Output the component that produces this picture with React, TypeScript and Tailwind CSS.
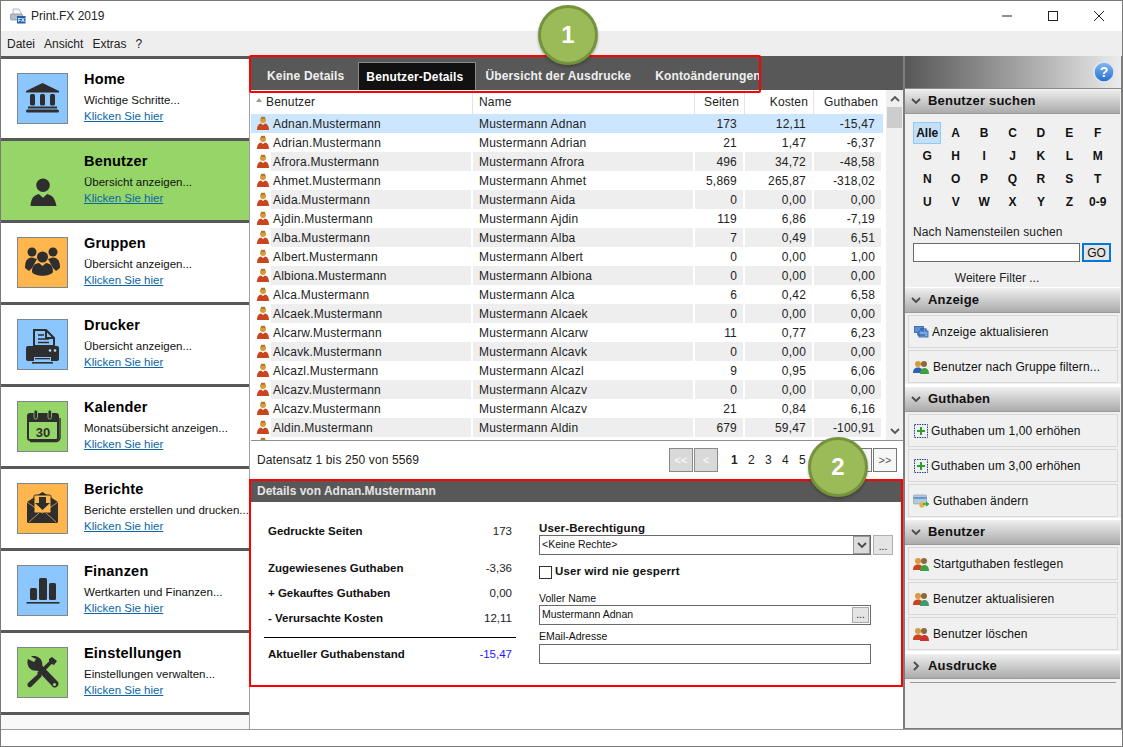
import React from "react";

const D = "#2e2e2e";

function IconBox({ bg, children }: { bg?: string; children: React.ReactNode }) {
  return (
    <div
      className={"w-[51px] h-[51px] shrink-0 " + (bg ? "border border-[#7d8790]" : "")}
      style={bg ? { background: bg } : undefined}
    >
      <svg viewBox="0 0 49 49" className="w-full h-full">{children}</svg>
    </div>
  );
}

const Bank = () => (
  <g fill={D}>
    <path d="M24.5 9 L41 17 V18.5 H8 V17 Z" />
    <rect x="12" y="20" width="5" height="11.5" rx="1.5" />
    <rect x="22" y="20" width="5" height="11.5" rx="1.5" />
    <rect x="32" y="20" width="5" height="11.5" rx="1.5" />
    <rect x="10" y="32.5" width="29" height="2" />
    <rect x="8" y="35.5" width="33" height="3" rx="1.5" />
  </g>
);
const Person = () => (
  <g fill={D}>
    <circle cx="25" cy="29" r="6.5" />
    <path d="M13 49 C13.5 42 15.5 39 21 37.5 L25 41 L29 37.5 C34.5 39 36.5 42 38 49 Z" />
  </g>
);
const Group = () => (
  <g fill={D}>
    <circle cx="14" cy="14" r="4.5" />
    <circle cx="35" cy="14" r="4.5" />
    <path d="M7 30 C7 23 9 20 14 19.5 L19 21 L14 30 L11 33 Z" />
    <path d="M42 30 C42 23 40 20 35 19.5 L30 21 L35 30 L38 33 Z" />
    <circle cx="24.5" cy="19" r="5.5" />
    <path d="M14 34 C14 27 17 25.5 21 25 L24.5 28 L28 25 C32 25.5 35 27 35 34 C32 39 17 39 14 34 Z" />
  </g>
);
const Printer = () => (
  <g>
    <path d="M16 10 H28 L36 18 V26 H16 Z" fill="#8cc6ff" stroke={D} strokeWidth="2" />
    <path d="M28 10 V18 H36" fill="none" stroke={D} strokeWidth="2" />
    <path d="M20 15 H26 M20 19 H31 M20 22.5 H31" stroke={D} strokeWidth="1.3" />
    <path d="M10 26 H39 Q41 26 41 28 V39 Q41 41 39 41 H10 Q8 41 8 39 V28 Q8 26 10 26 Z" fill={D} />
    <rect x="16" y="37" width="17" height="5" fill="#8cc6ff" />
    <rect x="17" y="38" width="15" height="1.3" fill={D} />
    <rect x="14" y="42" width="21" height="1.6" fill={D} />
    <circle cx="32" cy="30.5" r="1.3" fill="#b8dcff" />
    <circle cx="37" cy="30.5" r="1.3" fill="#b8dcff" />
  </g>
);
const Calendar = () => (
  <g>
    <path d="M12 12 H38 Q40 12 40 14 V36 Q40 38 38 38 H12 Q10 38 10 36 V14 Q10 12 12 12 Z" fill="none" stroke={D} strokeWidth="2" />
    <path d="M10 13 H40 V20 H10 Z" fill={D} />
    <path d="M12 39.5 H38 Q41 39.5 42 36 V16" fill="none" stroke={D} strokeWidth="1.4" />
    <rect x="16" y="8" width="3.5" height="9" rx="1.7" fill={D} stroke="#96d568" strokeWidth="0.8" />
    <rect x="30" y="8" width="3.5" height="9" rx="1.7" fill={D} stroke="#96d568" strokeWidth="0.8" />
    <text x="25" y="34.5" textAnchor="middle" fontSize="13" fontWeight="700" fontFamily="Liberation Sans" fill={D}>30</text>
  </g>
);
const Mail = () => (
  <g>
    <path d="M9 18 L24.5 8 L40 18 V38 Q40 39 38 39 H11 Q9 39 9 38 Z" fill={D} />
    <rect x="16" y="11" width="17" height="18" rx="1.5" fill="#ffb74d" stroke={D} strokeWidth="1" />
    <path d="M21 13 H28 V19 H32 L24.5 26 L17 19 H21 Z" fill={D} />
    <path d="M9 18 L24.5 29 L40 18" fill="none" stroke="#ffb74d" strokeWidth="0.7" />
    <path d="M11 38 L21 29 M38 38 L28 29" stroke="#ffb74d" strokeWidth="0.7" />
  </g>
);
const Bars = () => (
  <g fill={D}>
    <rect x="12" y="22" width="7" height="12" rx="1.5" />
    <rect x="21" y="12" width="8" height="22" rx="1.5" />
    <rect x="31" y="17" width="7" height="17" rx="1.5" />
    <rect x="8.5" y="36" width="33" height="1.6" />
  </g>
);
const Tools = () => (
  <g fill={D}>
    <path d="M10 11 L16 14 L18 11 L13 8.5 C18 7 23 10 24 14 C24.5 16 24 17.5 25 18.5 L40 34 C42 37 38 41 35 39 L20 23 C18 22.5 16 23 14 22 C10 20 8.5 15 10 11 Z" />
    <path d="M34 9 L39 13 L36 17 L33.5 16 L22 28 L19 25 L31 13.5 L31 11 Z" />
    <path d="M21 25 L24 28 L14 38 C12 41 8 38 10 35 Z" />
    <circle cx="36.5" cy="36.5" r="1.6" fill="#96d568" />
  </g>
);

const navItems: [string, string, string | undefined, React.ReactNode][] = [
  ["Home", "Wichtige Schritte...", "#8cc6ff", <Bank />],
  ["Benutzer", "Übersicht anzeigen...", undefined, <Person />],
  ["Gruppen", "Übersicht anzeigen...", "#ffb74d", <Group />],
  ["Drucker", "Übersicht anzeigen...", "#8cc6ff", <Printer />],
  ["Kalender", "Monatsübersicht anzeigen...", "#96d568", <Calendar />],
  ["Berichte", "Berichte erstellen und drucken...", "#ffb74d", <Mail />],
  ["Finanzen", "Wertkarten und Finanzen...", "#8cc6ff", <Bars />],
  ["Einstellungen", "Einstellungen verwalten...", "#96d568", <Tools />],
];

const rows: [string, string, string, string][] = [
  ["Adnan", "173", "12,11", "-15,47"],
  ["Adrian", "21", "1,47", "-6,37"],
  ["Afrora", "496", "34,72", "-48,58"],
  ["Ahmet", "5,869", "265,87", "-318,02"],
  ["Aida", "0", "0,00", "0,00"],
  ["Ajdin", "119", "6,86", "-7,19"],
  ["Alba", "7", "0,49", "6,51"],
  ["Albert", "0", "0,00", "1,00"],
  ["Albiona", "0", "0,00", "0,00"],
  ["Alca", "6", "0,42", "6,58"],
  ["Alcaek", "0", "0,00", "0,00"],
  ["Alcarw", "11", "0,77", "6,23"],
  ["Alcavk", "0", "0,00", "0,00"],
  ["Alcazl", "9", "0,95", "6,06"],
  ["Alcazv", "0", "0,00", "0,00"],
  ["Alcazv", "21", "0,84", "6,16"],
  ["Aldin", "679", "59,47", "-100,91"],
];

const UserIcon = () => (
  <svg viewBox="0 0 14 15" className="w-[14px] h-[15px] shrink-0">
    <circle cx="7" cy="4" r="3" fill="#d99a3c" />
    <rect x="5" y="0.8" width="4" height="2" fill="#a8772c" />
    <path d="M1 14 C1 9.5 3 8 5 7.5 L7 9 L9 7.5 C11 8 13 9.5 13 14 Z" fill="#c8451e" />
  </svg>
);

const SmallUsers = ({ a, b }: { a: string; b: string }) => (
  <svg viewBox="0 0 18 16" className="w-[18px] h-[16px] shrink-0">
    <circle cx="6" cy="5" r="3" fill="#d99a3c" />
    <path d="M1 14 C1 10 3 8.5 6 8.5 C9 8.5 11 10 11 14 Z" fill={a} />
    <circle cx="12" cy="5" r="3" fill="#8a6a3a" />
    <path d="M8 15 C8 11 10 9 12.5 9 C15 9 17 11 17 15 Z" fill={b} />
  </svg>
);

const PlusIcon = () => (
  <svg viewBox="0 0 14 14" className="w-[14px] h-[14px] shrink-0">
    <rect x="0.5" y="0.5" width="13" height="13" fill="none" stroke="#1b3f8f" strokeDasharray="1.5 1" />
    <path d="M7 3 V11 M3 7 H11" stroke="#2e9e2e" strokeWidth="2" />
  </svg>
);

const RefreshIcon = () => (
  <svg viewBox="0 0 15 12" className="w-[15px] h-[12px] shrink-0">
    <rect x="0.5" y="0.5" width="9" height="6" fill="#5b8fd8" stroke="#2a5ca8" strokeWidth="0.8" />
    <rect x="5" y="5" width="9" height="6" fill="#7aa9e6" stroke="#2a5ca8" strokeWidth="0.8" />
    <path d="M6 3 H12 V5 M11 9 H4 V7" fill="none" stroke="#1d4a96" strokeWidth="1.2" />
  </svg>
);

const CardIcon = () => (
  <svg viewBox="0 0 16 14" className="w-[16px] h-[14px] shrink-0">
    <rect x="0.5" y="1" width="13" height="9" rx="1" fill="#b9c7d6" stroke="#8a9aaa" strokeWidth="0.6" />
    <rect x="0.5" y="3" width="13" height="2" fill="#5c9bd8" />
    <circle cx="9" cy="11" r="2.6" fill="#e2b23a" />
    <path d="M10 10 H15 M13 8 L15.5 10 L13 12" fill="none" stroke="#3ba53b" strokeWidth="1.5" />
  </svg>
);

const Chevron = ({ right }: { right?: boolean }) => (
  <svg viewBox="0 0 10 10" className="w-[10px] h-[10px] shrink-0">
    <path d={right ? "M3 1 L7 5 L3 9" : "M1 3 L5 7 L9 3"} fill="none" stroke="#4a4a4a" strokeWidth="1.8" />
  </svg>
);

const SectionHead = ({ label, closed, h = "h-[25px]" }: { label: string; closed?: boolean; h?: string }) => (
  <div className={"flex items-center gap-[7px] pl-[6px] border-b border-[#9a9a9a] bg-gradient-to-b from-[#f0f0f0] to-[#ababab] mr-[1px] " + h}>
    <Chevron right={closed} />
    <span className="font-bold text-[13px] text-[#111] tracking-[0.2px]">{label}</span>
  </div>
);

const ActionBtn = ({ icon, label, gap = "gap-[5px]" }: { icon: React.ReactNode; label: string; gap?: string }) => (
  <div className={"flex items-center h-[33px] mx-[3px] mt-[2px] border border-[#d8d8d8] pl-[3px] text-[12px] text-[#111] tracking-[0.12px] " + gap}>
    <div className="w-[18px] flex justify-center shrink-0">{icon}</div>
    <span>{label}</span>
  </div>
);

const letters = ["Alle", "A", "B", "C", "D", "E", "F", "G", "H", "I", "J", "K", "L", "M", "N", "O", "P", "Q", "R", "S", "T", "U", "V", "W", "X", "Y", "Z", "0-9"];

const PageBtn = ({ label, disabled }: { label: string; disabled?: boolean }) => (
  <div className={"w-[24px] h-[24px] flex items-center justify-center text-[11px] border " + (disabled ? "bg-[#d9d9d9] border-[#8a8a8a] text-white" : "bg-[#f6f6f6] border-[#777] text-[#555]")}>
    {label}
  </div>
);

const StatRow = ({ label, value, h, blue }: { label: string; value: string; h: string; blue?: boolean }) => (
  <div className={"flex items-center justify-between " + h}>
    <span className="font-bold text-[11.5px] text-[#111]">{label}</span>
    <span className={"text-[11.5px] " + (blue ? "text-[#1a1aff]" : "text-[#222]")}>{value}</span>
  </div>
);

const Badge = ({ n, cls }: { n: string; cls: string }) => (
  <div className={"absolute w-[60px] h-[60px] rounded-full bg-[#9bbb59] border-[3px] border-[#76923c] flex items-center justify-center text-white font-bold text-[24px] shadow-[0_2px_3px_rgba(0,0,0,0.25)] " + cls}>
    {n}
  </div>
);

export default function App() {
  return (
    <div className="relative w-[1123px] h-[747px] overflow-hidden flex flex-col border border-[#7a7a7a] bg-white font-['Liberation_Sans',sans-serif] text-[12px] text-[#111]">
      {/* title bar */}
      <div className="h-[30px] shrink-0 flex items-center bg-white">
        <svg viewBox="0 0 16 16" className="w-[16px] h-[16px] ml-[9px]">
          <path d="M3 1 H9 L11 4 V8 H3 Z" fill="#f4f6f8" stroke="#9aa4ae" strokeWidth="0.7" />
          <rect x="0.5" y="6" width="12" height="6" rx="1" fill="#b4bec8" stroke="#75808c" strokeWidth="0.6" />
          <rect x="7" y="8" width="8.5" height="7.5" fill="#1f5fa8" />
          <text x="11.2" y="14.2" textAnchor="middle" fontSize="5.5" fontWeight="700" fill="#fff" fontFamily="Liberation Sans">FX</text>
        </svg>
        <span className="ml-[5px] text-[12px] text-[#222]">Print.FX 2019</span>
        <div className="ml-auto flex items-center mr-[0px]">
          <svg viewBox="0 0 46 30" className="w-[46px] h-[30px]"><path d="M18 15 H28" stroke="#222" strokeWidth="1" /></svg>
          <svg viewBox="0 0 46 30" className="w-[46px] h-[30px]"><rect x="18.5" y="10.5" width="9" height="9" fill="none" stroke="#222" /></svg>
          <svg viewBox="0 0 46 30" className="w-[46px] h-[30px]"><path d="M18 10 L28 20 M28 10 L18 20" stroke="#222" /></svg>
        </div>
      </div>
      {/* menu */}
      <div className="h-[25px] shrink-0 flex items-center gap-[9px] pl-[6px] bg-[#eeeeee] text-[12px] text-[#222]">
        <span>Datei</span>
        <span>Ansicht</span>
        <span>Extras</span>
        <span>?</span>
      </div>
      {/* body */}
      <div className="flex h-[673px] shrink-0 bg-white">
        {/* sidebar */}
        <div className="w-[248px] shrink-0 bg-[#f8f8f8] border-t-[3px] border-[#585858] self-stretch mr-[1px] shadow-[1px_0_0_#a0a0a0]">
          {navItems.map(([title, sub, bg, icon], i) => (
            <div key={title} className={"flex h-[82px] border-b-[3px] border-[#585858] pl-[16px] pt-[14px] " + (i === 1 ? "bg-[#96d568]" : "bg-white")}>
              <IconBox bg={bg}>{icon}</IconBox>
              <div className="ml-[16px] -mt-[3px]">
                <div className="font-bold text-[14.5px] leading-[18px] text-black tracking-[0.2px]">{title}</div>
                <div className="text-[11.5px] leading-[14px] mt-[5px] text-[#111]">{sub}</div>
                <div className="text-[11.5px] leading-[14px] mt-[2px] text-[#0b66a5] underline">Klicken Sie hier</div>
              </div>
            </div>
          ))}
        </div>
        {/* main */}
        <div className="w-[653px] shrink-0 flex flex-col pl-[1px]">
          <div className="h-[34px] shrink-0 bg-[#585858] flex items-end font-bold text-[12px] text-[#f0f0f0] tracking-[0.15px]">
            <div className="h-[28px] flex items-center ml-[16px] mt-[5px]">Keine Details</div>
            <div className="h-[28px] flex items-center ml-[14px] pl-[7px] pr-[12px] bg-[#111] border border-b-0 border-[#8a8a8a] text-white">Benutzer-Details</div>
            <div className="h-[28px] flex items-center ml-[9px]">Übersicht der Ausdrucke</div>
            <div className="h-[28px] flex items-center ml-[24px]">Kontoänderungen</div>
          </div>
          <div className="h-[351px] shrink-0 flex border-b border-[#909090]">
            <div className="w-[635px] shrink-0 overflow-hidden">
              <div className="h-[24px] flex items-center text-[12px] text-[#222] tracking-[0.15px]">
                <div className="w-[222px] h-full flex items-center border-r border-[#e4e4e4] relative">
                  <svg viewBox="0 0 6 4" className="w-[6px] h-[4px] ml-[5px] mb-[5px]"><path d="M3 0 L6 4 H0 Z" fill="#999" /></svg>
                  <span className="ml-[4px]">Benutzer</span>
                </div>
                <div className="w-[222px] h-full flex items-center pl-[6px] border-r border-[#e4e4e4]">Name</div>
                <div className="w-[50px] h-full flex items-center justify-end pr-[5px] border-r border-[#e4e4e4]">Seiten</div>
                <div className="w-[69px] h-full flex items-center justify-end pr-[5px] border-r border-[#e4e4e4]">Kosten</div>
                <div className="w-[69px] h-full flex items-center justify-end pr-[5px]">Guthaben</div>
              </div>
              {rows.map(([n, s, k, g], i) => {
                const sel = i === 0;
                const alt = i % 2 === 0 && !sel;
                const cell = alt ? "bg-[#eeeeee]" : "";
                return (
                  <div key={i} className={"flex h-[19px] text-[12px] text-[#222] tracking-[0.2px] " + (sel ? "bg-[#cce6ff] w-[632px]" : "")}>
                    <div className="w-[20px] shrink-0 flex items-center pl-[5px]"><UserIcon /></div>
                    <div className={"w-[200px] shrink-0 flex items-center pl-[2px] " + cell}>{n}.Mustermann</div>
                    <div className={"w-[220px] shrink-0 ml-[2px] flex items-center pl-[6px] " + cell}>Mustermann {n}</div>
                    <div className={"w-[48px] shrink-0 ml-[2px] flex items-center justify-end pr-[6px] " + cell}>{s}</div>
                    <div className={"w-[67px] shrink-0 ml-[2px] flex items-center justify-end pr-[6px] " + cell}>{k}</div>
                    <div className={"w-[67px] shrink-0 ml-[2px] flex items-center justify-end pr-[6px] " + cell}>{g}</div>
                  </div>
                );
              })}
              <div className="flex h-[19px]"><div className="pl-[5px]"><UserIcon /></div></div>
            </div>
            <div className="w-[17px] shrink-0 bg-[#f0f0f0] flex flex-col items-center">
              <svg viewBox="0 0 10 10" className="w-[10px] h-[10px] mt-[4px]"><path d="M1 7 L5 3 L9 7" fill="none" stroke="#555" strokeWidth="1.8" /></svg>
              <div className="w-[15px] h-[21px] bg-[#cdcdcd] mt-[3px]" />
              <svg viewBox="0 0 10 10" className="w-[10px] h-[10px] mt-auto mb-[4px]"><path d="M1 3 L5 7 L9 3" fill="none" stroke="#555" strokeWidth="1.8" /></svg>
            </div>
          </div>
          <div className="h-[38px] shrink-0 flex items-center pl-[6px] text-[12px] text-[#222] tracking-[0.12px]">
            <span>Datensatz 1 bis 250 von 5569</span>
            <div className="ml-auto flex items-center gap-[1px] mr-[6px]">
              <PageBtn label="<<" disabled />
              <PageBtn label="<" disabled />
              <div className="flex w-[127px] pl-[7px] text-[12px] mr-[1px]">
                <span className="w-[17px] text-center font-bold">1</span>
                <span className="w-[17px] text-center">2</span>
                <span className="w-[17px] text-center">3</span>
                <span className="w-[17px] text-center">4</span>
                <span className="w-[17px] text-center">5</span>
              </div>
              <PageBtn label=">" />
              <PageBtn label=">>" />
            </div>
          </div>
          <div className="h-[23px] shrink-0 bg-[#585858] flex items-center pl-[6px] font-bold text-[12px] text-[#e4e4e4]">Details von Adnan.Mustermann</div>
          <div className="flex pt-[20px]">
            <div className="w-[252px] ml-[13px] shrink-0 flex flex-col">
              <div className="px-[4px]">
                <StatRow label="Gedruckte Seiten" value="173" h="h-[20px] mb-[17px]" />
                <StatRow label="Zugewiesenes Guthaben" value="-3,36" h="h-[20px] mb-[5px]" />
                <StatRow label="+ Gekauftes Guthaben" value="0,00" h="h-[20px] mb-[5px]" />
                <StatRow label="- Verursachte Kosten" value="12,11" h="h-[20px]" />
              </div>
              <div className="border-t border-black mt-[8px]" />
              <div className="px-[4px] mt-[7px]">
                <StatRow label="Aktueller Guthabenstand" value="-15,47" h="h-[20px]" blue />
              </div>
            </div>
            <div className="ml-[23px] w-[354px] flex flex-col">
              <div className="font-bold text-[11.5px] leading-[14px] -mt-[1px] tracking-[0.15px]">User-Berechtigung</div>
              <div className="flex items-center">
                <div className="w-[332px] h-[20px] border border-[#6a6a6a] flex items-center pl-[2px] text-[10.5px]">
                  <span>&lt;Keine Rechte&gt;</span>
                  <div className="ml-auto w-[17px] h-[18px] bg-[#dcdcdc] border border-[#999] flex items-center justify-center"><Chevron /></div>
                </div>
                <div className="ml-[2px] w-[20px] h-[20px] bg-[#e4e4e4] border border-[#b0b0b0] flex items-end justify-center text-[10px]">...</div>
              </div>
              <div className="flex items-center mt-[10px] h-[14px]">
                <div className="w-[13px] h-[13px] border border-[#333] bg-white" />
                <span className="ml-[3px] font-bold text-[11.5px] tracking-[0.15px]">User wird nie gesperrt</span>
              </div>
              <div className="text-[10.5px] leading-[13px] mt-[13px]">Voller Name</div>
              <div className="w-[332px] h-[20px] border border-[#6a6a6a] flex items-center pl-[2px] text-[10.5px]">
                <span>Mustermann Adnan</span>
                <div className="ml-auto mr-[1px] w-[17px] h-[16px] bg-[#e4e4e4] border border-[#aaa] flex items-end justify-center text-[10px]">...</div>
              </div>
              <div className="text-[10.5px] leading-[13px] mt-[5px]">EMail-Adresse</div>
              <div className="w-[332px] h-[20px] border border-[#6a6a6a] mt-[1px]" />
            </div>
          </div>
        </div>
        {/* right panel */}
        <div className="flex-1 flex flex-col bg-[#f0f0f0] border-l-2 border-r border-[#7d7d7d] border-b">
          <div className="h-[33px] shrink-0 flex items-center justify-end pr-[6px] bg-gradient-to-r from-[#585858] to-[#ececec] border-b border-[#8a8a8a]">
            <svg viewBox="0 0 22 22" className="w-[22px] h-[22px]">
              <defs>
                <linearGradient id="hb" x1="0" y1="0" x2="0" y2="1">
                  <stop offset="0" stopColor="#8ab8ee" />
                  <stop offset="1" stopColor="#1f6fd0" />
                </linearGradient>
              </defs>
              <circle cx="11" cy="11" r="10" fill="url(#hb)" stroke="#dfe7f0" strokeWidth="1.4" />
              <text x="11" y="16" textAnchor="middle" fontSize="14" fontWeight="700" fill="#fff" fontFamily="Liberation Sans">?</text>
            </svg>
          </div>
          <SectionHead label="Benutzer suchen" />
          <div className="h-[173px] shrink-0 px-[8px] pt-[8px]">
            <div className="grid grid-cols-7 w-[199px] gap-y-[1px]">
              {letters.map((l, i) => (
                <div key={l} className={"h-[22px] flex items-center justify-center font-bold text-[12px] " + (i === 0 ? "bg-[#c4dff6] border border-[#90c8f6]" : "")}>{l}</div>
              ))}
            </div>
            <div className="text-[12px] mt-[12px] leading-[14px] text-[#222] tracking-[0.12px]">Nach Namensteilen suchen</div>
            <div className="flex items-center gap-[2px] mt-[4px]">
              <div className="w-[167px] h-[19px] bg-white border border-[#6a6a6a]" />
              <div className="w-[29px] h-[19px] bg-[#e4e4e4] border-2 border-[#0078d7] flex items-center justify-center text-[12px]">GO</div>
            </div>
            <div className="text-center text-[12px] mt-[7px] w-[168px] ml-[0px] text-[#222]">Weitere Filter ...</div>
          </div>
          <div className="h-[1px] bg-white shrink-0" />
          <SectionHead label="Anzeige" />
          <ActionBtn icon={<RefreshIcon />} label="Anzeige aktualisieren" gap="gap-[2px]" />
          <ActionBtn icon={<SmallUsers a="#2a62b8" b="#3fa03f" />} label="Benutzer nach Gruppe filtern..." gap="gap-[3px]" />
          <div className="h-[3px] bg-white shrink-0 mt-[1px]" />
          <SectionHead label="Guthaben" />
          <ActionBtn icon={<PlusIcon />} label="Guthaben um 1,00 erhöhen" gap="gap-[1px]" />
          <ActionBtn icon={<PlusIcon />} label="Guthaben um 3,00 erhöhen" gap="gap-[1px]" />
          <ActionBtn icon={<CardIcon />} label="Guthaben ändern" gap="gap-[3px]" />
          <div className="h-[2px] bg-white shrink-0 mt-[1px]" />
          <SectionHead label="Benutzer" />
          <ActionBtn icon={<SmallUsers a="#c8451e" b="#3fa03f" />} label="Startguthaben festlegen" gap="gap-[3px]" />
          <ActionBtn icon={<SmallUsers a="#c8451e" b="#3f9a70" />} label="Benutzer aktualisieren" gap="gap-[3px]" />
          <ActionBtn icon={<SmallUsers a="#c8451e" b="#d03030" />} label="Benutzer löschen" gap="gap-[3px]" />
          <div className="h-[3px] bg-white shrink-0 mt-[1px]" />
          <SectionHead label="Ausdrucke" closed />
          <div className="h-[1px] bg-[#999] mx-[5px] mt-[3px]" />
        </div>
      </div>
      {/* status bar */}
      <div className="flex-1 border-t border-[#9a9a9a] bg-white" />

      {/* annotations */}
      <div className="absolute left-[248px] top-[54px] w-[512px] h-[38px] border-2 border-[#ff0000] rounded-[2px] pointer-events-none" />
      <div className="absolute left-[248px] top-[478px] w-[654px] h-[208px] border-2 border-[#ff0000] pointer-events-none" />
      <Badge n="1" cls="left-[537px] top-[4px]" />
      <Badge n="2" cls="left-[807px] top-[436px]" />
    </div>
  );
}
